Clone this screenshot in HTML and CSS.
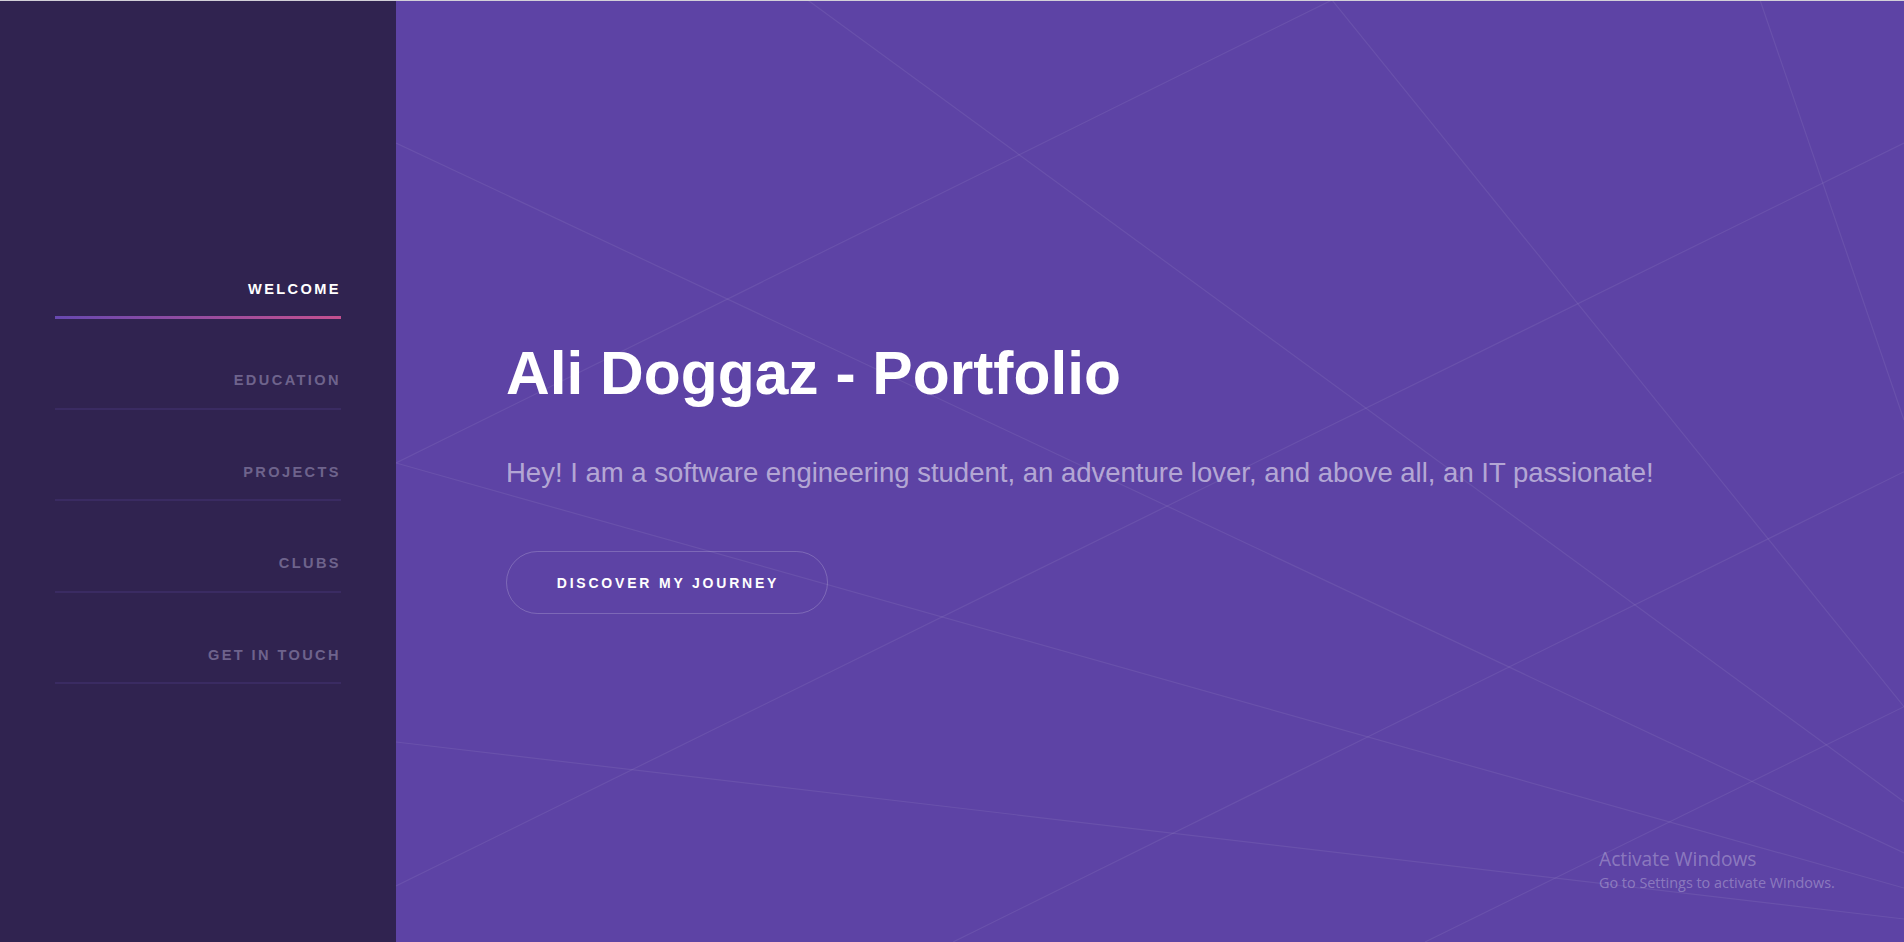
FILE: index.html
```html
<!DOCTYPE html>
<html lang="en">
<head>
<meta charset="utf-8">
<title>Ali Doggaz - Portfolio</title>
<link rel="stylesheet" href="styles.css">
</head>
<body>
<div class="page">
  <aside class="sidebar">
    <nav class="nav">
      <a class="nav-item active" href="#welcome">WELCOME</a>
      <a class="nav-item" href="#education">EDUCATION</a>
      <a class="nav-item" href="#projects">PROJECTS</a>
      <a class="nav-item" href="#clubs">CLUBS</a>
      <a class="nav-item" href="#contact">GET IN TOUCH</a>
    </nav>
  </aside>
  <main class="hero">
    <svg class="hero-lines" viewBox="396 0 1508 942" preserveAspectRatio="none" aria-hidden="true">
      <line x1="396" y1="143" x2="1904" y2="853"/>
      <line x1="396" y1="463" x2="1332" y2="0"/>
      <line x1="807.6" y1="0" x2="1904" y2="801.7"/>
      <line x1="1332" y1="0" x2="1904" y2="706.7"/>
      <line x1="1760" y1="0" x2="1904" y2="420"/>
      <line x1="1904" y1="143" x2="396" y2="886"/>
      <line x1="396" y1="463" x2="1904" y2="888"/>
      <line x1="396" y1="742" x2="1904" y2="919"/>
      <line x1="1904" y1="706.7" x2="1425" y2="942"/>
      <line x1="953" y1="942" x2="1904" y2="471.7"/>
    </svg>
    <div class="hero-content">
      <h1 class="hero-title">Ali Doggaz - Portfolio</h1>
      <p class="hero-text">Hey! I am a software engineering student, an adventure lover, and above all, an IT passionate!</p>
      <a class="hero-btn" href="#education">DISCOVER MY JOURNEY</a>
    </div>
    <div class="watermark">
      <div class="wm-title">Activate Windows</div>
      <div class="wm-sub">Go to Settings to activate Windows.</div>
    </div>
  </main>
</div>
</body>
</html>
```
FILE: styles.css
```css
* { box-sizing: border-box; }
html, body { margin: 0; padding: 0; }
body {
  font-family: "Liberation Sans", Arial, sans-serif;
  background: #5d43a5;
  overflow: hidden;
}
.page {
  display: flex;
  height: 942px;
  border-top: 1px solid #d2d0d8;
}
.sidebar {
  width: 396px;
  flex: 0 0 396px;
  background: #302350;
  display: flex;
  flex-direction: column;
  justify-content: center;
  padding: 0 0 32px 0;
}
.nav {
  display: flex;
  flex-direction: column;
  padding: 0 55px;
}
.nav-item {
  display: block;
  text-align: right;
  text-decoration: none;
  font-weight: 700;
  font-size: 14.6px;
  line-height: 17px;
  letter-spacing: 2.4px;
  color: #6e638c;
  padding: 54px 0 18.5px;
  border-bottom: 2px solid #3a2b62;
}
.nav-item.active {
  color: #ffffff;
  border-bottom: 0;
  background: linear-gradient(90deg, #6748b0, #c4508f) no-repeat left bottom / 100% 3px;
  padding-bottom: 21.5px;
  margin-bottom: -1px;
}
.hero {
  position: relative;
  flex: 1;
  display: flex;
  flex-direction: column;
  justify-content: center;
  padding: 8px 0 0 110px;
  overflow: hidden;
}
.hero-lines {
  position: absolute;
  left: 0;
  top: -1px;
  width: 100%;
  height: 942px;
}
.hero-lines line {
  stroke: rgba(255, 255, 255, 0.075);
  stroke-width: 1.2;
}
.hero-content {
  position: relative;
  display: flex;
  flex-direction: column;
  align-items: flex-start;
}
.hero-title {
  margin: 0;
  color: #ffffff;
  font-weight: 700;
  font-size: 60.5px;
  line-height: 72.5px;
}
.hero-text {
  margin: 46.5px 0 0;
  color: rgba(255, 255, 255, 0.55);
  font-size: 27.5px;
  line-height: 33px;
}
.hero-btn {
  margin-top: 62px;
  width: 322px;
  height: 63px;
  display: flex;
  align-items: center;
  justify-content: center;
  border: 1px solid rgba(255, 255, 255, 0.2);
  border-radius: 32px;
  color: #ffffff;
  text-decoration: none;
  font-weight: 700;
  font-size: 14px;
  letter-spacing: 2.8px;
  padding-left: 2px;
}
.watermark {
  position: absolute;
  left: 1203px;
  top: 846px;
  color: rgba(255, 255, 255, 0.3);
  font-family: "Open Sans", "Noto Sans", sans-serif;
}
.wm-title {
  font-size: 19.2px;
  line-height: 24px;
}
.wm-sub {
  margin-top: 2px;
  font-size: 14.4px;
  line-height: 20px;
}
```
